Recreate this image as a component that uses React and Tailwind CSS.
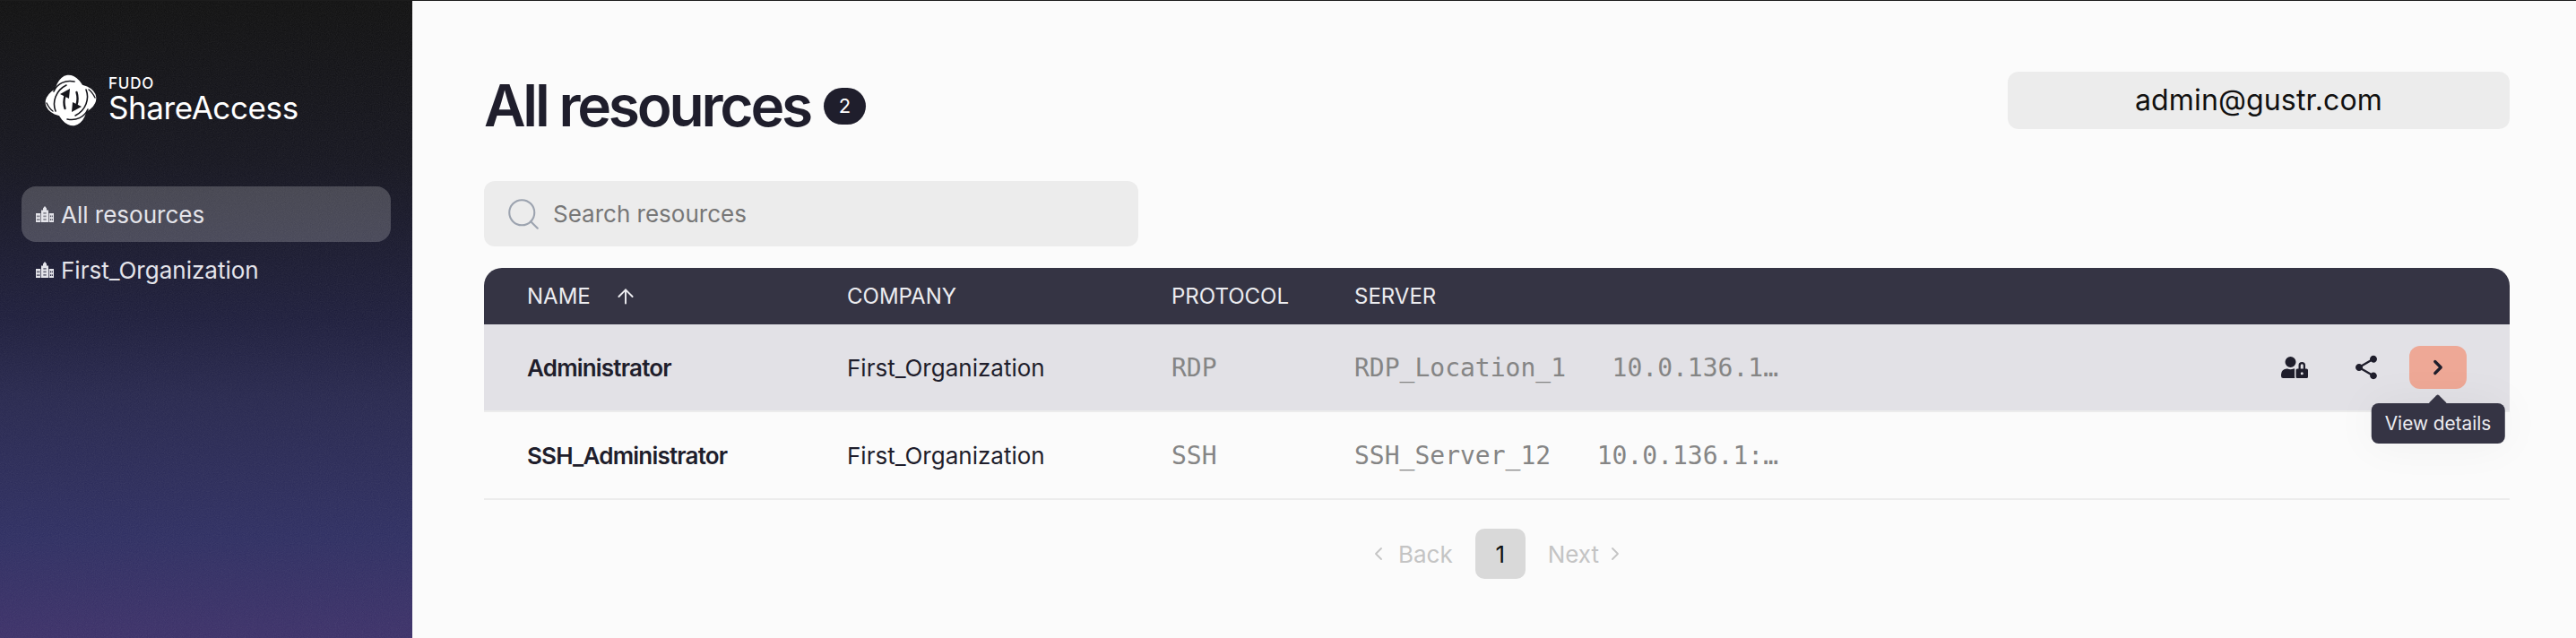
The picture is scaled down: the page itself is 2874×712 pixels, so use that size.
import React from 'react';
import { ArrowUp, ChevronLeft, ChevronRight, Search } from 'lucide-react';
import { FaUserLock } from 'react-icons/fa';
import { MdShare } from 'react-icons/md';

const RESOURCES = [
  { name: 'Administrator', company: 'First_Organization', protocol: 'RDP', server: 'RDP_Location_1', address: '10.0.136.1…', active: true },
  { name: 'SSH_Administrator', company: 'First_Organization', protocol: 'SSH', server: 'SSH_Server_12', address: '10.0.136.1:…' },
];

const FudoLogo = () => (
  <svg width="58" height="58" viewBox="0 0 58 58" className="shrink-0">
    <g fill="#fff">
      <ellipse cx="29" cy="29" rx="18" ry="28.5" transform="rotate(-8 29 29)" />
      <ellipse cx="29" cy="29" rx="28.5" ry="18" transform="rotate(-8 29 29)" />
    </g>
    {[0, 180].map((angle) => (
      <g key={angle} transform={`rotate(${angle} 29 29)`}>
        <g fill="none" stroke="#16161c" strokeLinecap="round">
          <path d="M10 19C14 10 23 6 33 8" strokeWidth="1.6" />
          <path d="M12 41C8 31 12 18 24 12" strokeWidth="1.6" />
          <path d="M2 32C4 36 6 39 9 41" strokeWidth="1.4" />
          <path d="M22.5 24C21 29 21 33 22.5 38" strokeWidth="2.4" />
        </g>
        <path d="M17 22L28 16L27 27Z" fill="#16161c" />
      </g>
    ))}
  </svg>
);

const CityIcon = () => (
  <svg width="20" height="18" viewBox="0 0 20 18" fill="currentColor" className="shrink-0">
    <path
      fillRule="evenodd"
      d="M6 18V4.5h2V2.5L10 0l2 2.5v2h2V18H6Zm2.6-11v1.8h1V7h-1Zm1.8 0v1.8h1V7h-1Zm-1.8 3.5v1.8h1v-1.8h-1Zm1.8 0v1.8h1v-1.8h-1Zm-1.8 3.5v1.8h1V14h-1Zm1.8 0v1.8h1V14h-1Z"
    />
    <path
      fillRule="evenodd"
      d="M0 18V8h5.3v10H0Zm1.2-7.5v1.8h1.1v-1.8H1.2Zm1.8 0v1.8h1.1v-1.8H3Zm-1.8 3.8v1.8h1.1v-1.8H1.2Zm1.8 0v1.8h1.1v-1.8H3ZM14.7 18V8H20v10h-5.3Zm1.2-7.5v1.8H17v-1.8h-1.1Zm1.8 0v1.8h1.1v-1.8h-1.1Zm-1.8 3.8v1.8H17v-1.8h-1.1Zm1.8 0v1.8h1.1v-1.8h-1.1Z"
    />
  </svg>
);

const SideItem = ({ label, active }) => (
  <div className={`flex h-[62px] items-center gap-2 rounded-2xl px-4 text-[26px] text-[#e4e4ea] ${active ? 'bg-white/20' : ''}`}>
    <CityIcon />
    <span>{label}</span>
  </div>
);

const ResourceRow = ({ row }) => (
  <div className={`flex h-[98px] items-center border-b-2 border-[#ececec] pl-12 pr-12 ${row.active ? 'bg-[#e2e1e6]' : ''}`}>
    <div className="w-[357px] text-[26px] font-semibold tracking-[-0.8px] text-[#1f1e2c]">{row.name}</div>
    <div className="w-[362px] text-[26px] text-[#1f1e2c]">{row.company}</div>
    <div className="w-[204px] pt-[2px] font-['DejaVu_Sans_Mono',monospace] text-[28px] text-[#858585]">{row.protocol}</div>
    <div className="flex w-[473px] justify-between pt-[2px] font-['DejaVu_Sans_Mono',monospace] text-[28px] text-[#858585]">
      <span>{row.server}</span>
      <span>{row.address}</span>
    </div>
    {row.active && (
      <div className="flex flex-1 justify-end gap-4 text-[#1f1e2c]">
        <div className="flex h-12 w-16 items-center justify-center"><FaUserLock size={30} /></div>
        <div className="flex h-12 w-16 items-center justify-center"><MdShare size={32} /></div>
        <div className="relative flex h-12 w-16 items-center justify-center rounded-xl bg-[#eea896]">
          <ChevronRight size={26} strokeWidth={3} />
          <div className="absolute left-1/2 top-[64px] z-10 -translate-x-1/2 whitespace-nowrap rounded-lg bg-[#353444] px-[15px] py-[9px] text-[20.8px] leading-[27px] text-[#ececf0] shadow-[0_0_50px_rgba(0,0,0,0.05)]">
            <div className="absolute -top-[7px] left-1/2 h-[15px] w-[15px] -translate-x-1/2 rotate-45 rounded-[2px] bg-[#353444]" />
            <span className="relative">View details</span>
          </div>
        </div>
      </div>
    )}
  </div>
);

export default function App() {
  return (
    <div className="flex h-[712px] w-full overflow-hidden border-t border-[#1c1c1c] bg-[#fbfbfb] font-['Inter',sans-serif]">
      <aside className="relative flex w-[460px] shrink-0 flex-col bg-[linear-gradient(180deg,#0f0f0f_0%,#14141e_25%,#1d1d3c_50%,#27274e_62%,#2e2e62_84%,#3c3069_100%)] px-6">
        <svg className="pointer-events-none absolute inset-0 h-full w-full opacity-[0.1]">
          <filter id="grain">
            <feTurbulence type="fractalNoise" baseFrequency="0.9" numOctaves="2" stitchTiles="stitch" />
            <feColorMatrix type="saturate" values="0" />
          </filter>
          <rect width="100%" height="100%" filter="url(#grain)" />
        </svg>
        <div className="relative ml-[26px] mt-[82px] flex items-center gap-[13px] text-white">
          <FudoLogo />
          <div className="flex flex-col">
            <span className="h-[16px] text-[17px] font-medium leading-[16px] tracking-[0.8px]">FUDO</span>
            <span className="h-[38px] text-[35px] leading-[38px] tracking-[-0.4px]">ShareAccess</span>
          </div>
        </div>
        <nav className="relative mt-[67px] flex flex-col">
          <SideItem label="All resources" active />
          <SideItem label="First_Organization" />
        </nav>
      </aside>

      <main className="flex min-w-0 flex-1 flex-col pl-20 pr-[74px] pt-[79px]">
        <div className="flex items-start justify-between">
          <div className="flex h-[76px] items-center gap-[15px]">
            <h1 className="text-[64px] font-semibold leading-[76px] tracking-[-3.2px] text-[#1f1e2c]">All resources</h1>
            <span className="flex h-[41px] w-[47px] items-center justify-center rounded-full bg-[#1f1e2c] text-[22px] text-white">2</span>
          </div>
          <div className="flex h-16 w-[560px] items-center justify-center rounded-xl bg-[#ececec] text-[32px] tracking-[0.15px] text-[#111]">admin@gustr.com</div>
        </div>

        <div className="mt-[46px] flex h-[73px] w-[730px] items-center gap-3 rounded-xl bg-[#ececec] pl-[23px] text-[26px] text-[#777]">
          <Search size={42} strokeWidth={1.2} className="text-[#9ca3af]" />
          <span>Search resources</span>
        </div>

        <div className="mt-6">
          <div className="flex h-[63px] items-center rounded-t-[20px] bg-[#353444] pl-12 text-[24px] text-[#ececf0]">
            <div className="flex w-[357px] items-center gap-[26px]">NAME <ArrowUp size={26} strokeWidth={1.8} /></div>
            <div className="w-[362px]">COMPANY</div>
            <div className="w-[204px]">PROTOCOL</div>
            <div>SERVER</div>
          </div>
          {RESOURCES.map((row) => <ResourceRow key={row.name} row={row} />)}
        </div>

        <div className="mt-8 flex items-center justify-center text-[26px] text-[#c4c4c4]">
          <ChevronLeft size={24} strokeWidth={1.8} />
          <span className="ml-[10px]">Back</span>
          <span className="ml-[25px] flex h-14 w-14 items-center justify-center rounded-[10px] bg-[#d9d9d9] text-[#111]">1</span>
          <span className="ml-[25px]">Next</span>
          <ChevronRight size={24} strokeWidth={1.8} className="ml-[6px]" />
        </div>
      </main>
    </div>
  );
}
